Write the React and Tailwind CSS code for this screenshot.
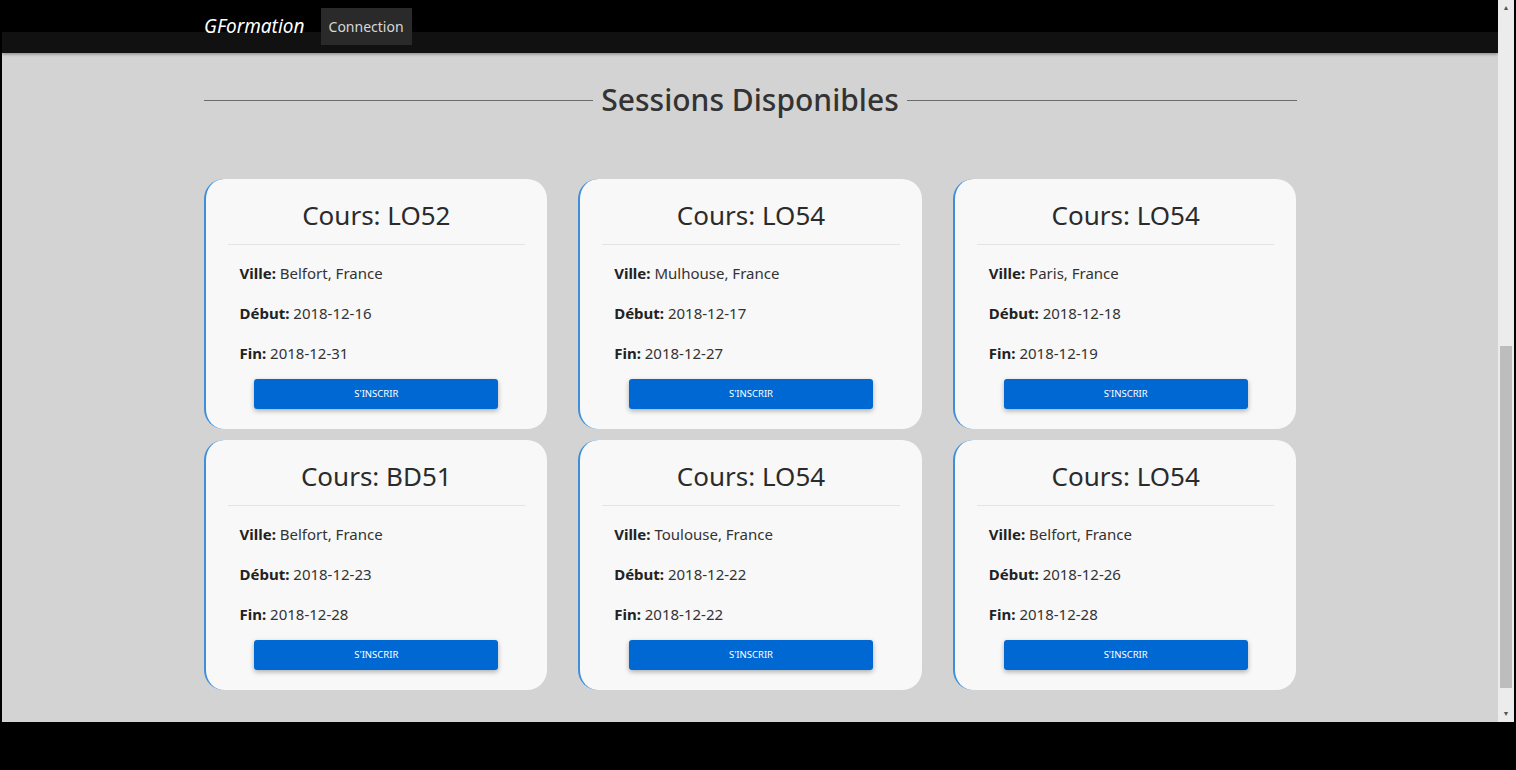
import React from "react";

const sessions = [
  { cours: "LO52", ville: "Belfort, France", debut: "2018-12-16", fin: "2018-12-31" },
  { cours: "LO54", ville: "Mulhouse, France", debut: "2018-12-17", fin: "2018-12-27" },
  { cours: "LO54", ville: "Paris, France", debut: "2018-12-18", fin: "2018-12-19" },
  { cours: "BD51", ville: "Belfort, France", debut: "2018-12-23", fin: "2018-12-28" },
  { cours: "LO54", ville: "Toulouse, France", debut: "2018-12-22", fin: "2018-12-22" },
  { cours: "LO54", ville: "Belfort, France", debut: "2018-12-26", fin: "2018-12-28" },
];

const SessionCard = ({ session }) => {
  return (
    <div className="h-[250px] rounded-[20px] border-l-2 border-[#3d8fdc] bg-[#f8f8f8] px-[22px] pt-[16px]">
      <h3 className="text-center text-[26px] font-normal leading-[40px] text-[#2b2b2b]">Cours: {session.cours}</h3>
      <hr className="mt-[9px] border-t border-[#e4e4e4]" />
      <div className="flex flex-col gap-[16px] pl-[12px] pt-[16px] text-[15px] leading-[24px] text-[#333]">
        <p>
          <b className="font-bold text-[#222]">Ville:</b> {session.ville}
        </p>
        <p>
          <b className="font-bold text-[#222]">Début:</b> {session.debut}
        </p>
        <p>
          <b className="font-bold text-[#222]">Fin:</b> {session.fin}
        </p>
      </div>
      <div className="flex justify-center pt-[14px]">
        <button className="h-[30px] w-[244px] rounded-[3px] bg-[#0068d2] text-[9.5px] uppercase text-white shadow-[0_2px_5px_rgba(0,0,0,0.3)]">
          S'inscrir
        </button>
      </div>
    </div>
  );
};

export default function App() {
  return (
    <div
      className="flex h-[770px] w-full flex-col overflow-hidden bg-black"
      style={{ fontFamily: "'Noto Sans', 'Open Sans', sans-serif" }}
    >
      <div className="flex h-[722px]">
        <div className="w-[2px] bg-black" />

        {/* Page */}
        <div className="flex flex-1 flex-col bg-[#d3d3d3]">
          <nav className="flex h-[53px] items-center gap-[16px] bg-[linear-gradient(to_bottom,#000_0,#000_32px,#111_32px,#111_100%)] pl-[202px] shadow-[0_1px_3px_rgba(0,0,0,0.4)]">
            <span className="text-[19px] italic text-white">GFormation</span>
            <button className="h-[37px] bg-[#2a2a2a] px-[8px] text-[14px] text-[#d8d8d8]">Connection</button>
          </nav>

          <main className="mx-auto w-[1093px]">
            {/* Title */}
            <div className="flex items-center gap-[8px] pt-[27px]">
              <div className="h-px flex-1 bg-[#6b6b6b]" />
              <h2 className="text-[30px] font-medium leading-[40px] text-[#333]">Sessions Disponibles</h2>
              <div className="h-px flex-1 bg-[#6b6b6b]" />
            </div>

            <div className="mt-[59px] grid grid-cols-3 gap-x-[31px] gap-y-[11px]">
              {sessions.map((s, i) => (
                <SessionCard key={i} session={s} />
              ))}
            </div>
          </main>
        </div>

        {/* Scrollbar */}
        <div className="flex w-[18px]">
          <div className="flex w-[16px] flex-col items-center bg-[#ececec]">
            <div className="flex h-[16px] items-center justify-center text-[7px] text-[#555]">▲</div>
            <div className="flex-1 w-full px-[2px]">
              <div className="mt-[330px] h-[342px] w-full bg-[#bdbdbd]" />
            </div>
            <div className="flex h-[16px] items-center justify-center text-[7px] text-[#555]">▼</div>
          </div>
          <div className="w-[2px] bg-black" />
        </div>
      </div>
      <div className="h-[48px] bg-black" />
    </div>
  );
}
